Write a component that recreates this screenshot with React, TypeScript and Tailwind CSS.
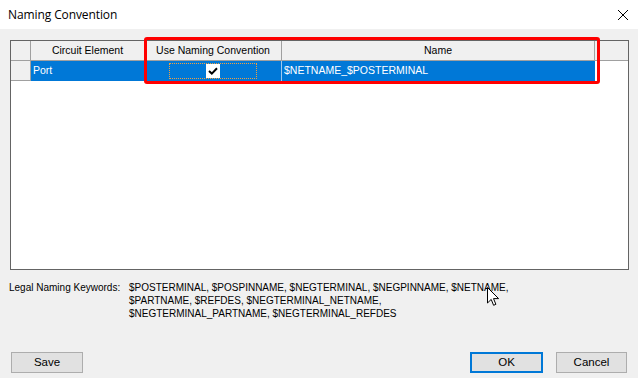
import React from 'react';

const headerCell =
  'h-full flex items-center justify-center bg-[#f0f0f0] border-r border-b border-[#a0a0a0] text-black';

const Cursor: React.FC = () => (
  <svg width="13" height="20" viewBox="0 0 13 20" className="absolute left-[487px] top-[287px]">
    <path
      d="M0.5 0.5 L0.5 16 L4.2 12.4 L6.6 18.3 L8.9 17.3 L6.5 11.6 L11.6 11.6 Z"
      fill="#ffffff"
      stroke="#000000"
      strokeWidth="1"
      strokeLinejoin="miter"
    />
  </svg>
);

const App: React.FC = () => {
  return (
    <div className="relative w-[638px] h-[378px] bg-[#f0f0f0] overflow-hidden font-['Liberation_Sans',Arial,sans-serif] text-[11px] text-black">
      {/* title bar */}
      <div className="h-[29px] bg-white flex items-center justify-between pl-[8px] pr-[5px]">
        <span className="text-[12px] font-['Open_Sans','Noto_Sans',sans-serif] leading-none tracking-[-0.1px]">Naming Convention</span>
        <svg width="12" height="12" viewBox="0 0 12 12" className="mr-[4px]">
          <path d="M1 1 L11 11 M11 1 L1 11" stroke="#000" strokeWidth="1" />
        </svg>
      </div>

      {/* grid */}
      <div className="ml-[10px] mt-[11px] w-[619px] h-[230px] border border-[#646464] bg-white text-[10.5px]">
        <div className="flex h-[20px]">
          <div className={`${headerCell} w-[20px]`} />
          <div className={`${headerCell} w-[114px]`}>Circuit Element</div>
          <div className={`${headerCell} w-[137px]`}>Use Naming Convention</div>
          <div className={`${headerCell} w-[313px]`}>Name</div>
          <div className={`${headerCell} flex-1 border-r-0`} />
        </div>
        <div className="flex h-[20px]">
          <div className="w-[20px] h-full bg-[#f0f0f0] border-r border-b border-[#a0a0a0]" />
          <div className="w-[564px] h-full bg-[#0078d7] flex text-white">
            <div className="w-[114px] h-full flex items-center pl-[2px] border-r border-[#0078d7]">Port</div>
            <div className="w-[137px] h-full flex items-center justify-center border-r border-[#a0c8ee]">
              <div className="w-[88px] h-[16px] border border-dotted border-[#f0a040] flex items-center justify-center">
                <div className="w-[14px] h-[14px] bg-white flex items-center justify-center">
                  <svg width="10" height="8" viewBox="0 0 10 8">
                    <path d="M1 4 L3.8 6.6 L9 1.2" stroke="#000" strokeWidth="2" fill="none" />
                  </svg>
                </div>
              </div>
            </div>
            <div className="flex-1 h-full flex items-center pl-[2px]">$NETNAME_$POSTERMINAL</div>
          </div>
        </div>
      </div>

      {/* highlight box */}
      <div className="absolute left-[144px] top-[37px] w-[456px] h-[47px] border-[3px] border-[#ff0000] rounded-[3px]" />

      {/* keywords */}
      <div className="flex ml-[9px] mt-[11px] leading-[13px] text-[10px] whitespace-nowrap">
        <div className="w-[120px] shrink-0">Legal Naming Keywords:</div>
        <div>
          <div>$POSTERMINAL, $POSPINNAME, $NEGTERMINAL, $NEGPINNAME, $NETNAME,</div>
          <div>$PARTNAME, $REFDES, $NEGTERMINAL_NETNAME,</div>
          <div>$NEGTERMINAL_PARTNAME, $NEGTERMINAL_REFDES</div>
        </div>
      </div>

      {/* buttons */}
      <div className="absolute left-0 right-0 top-[352px] flex items-center pl-[11px] pr-[11px]">
        <button className="w-[72px] h-[21px] bg-[#e1e1e1] border border-[#adadad] text-[11.5px]">Save</button>
        <div className="flex-1" />
        <button className="w-[73px] h-[21px] bg-[#e1e1e1] border-2 border-[#0078d7] text-[11.5px]">OK</button>
        <button className="w-[71px] h-[21px] ml-[13px] bg-[#e1e1e1] border border-[#adadad] text-[11.5px]">Cancel</button>
      </div>

      <Cursor />
    </div>
  );
};

export default App;
